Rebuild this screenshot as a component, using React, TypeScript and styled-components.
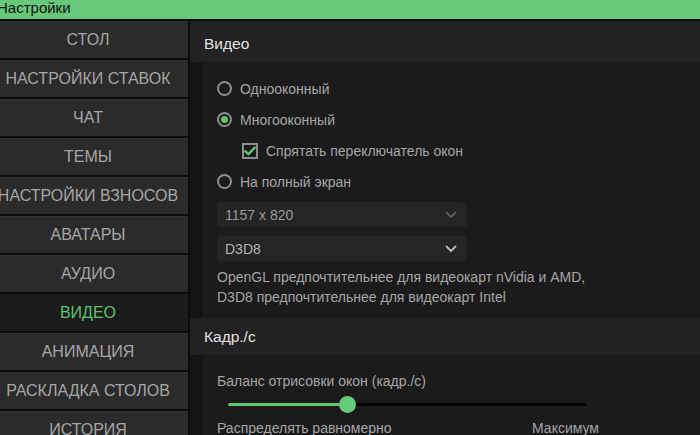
import React from "react";
import styled, { createGlobalStyle } from "styled-components";

const GlobalStyle = createGlobalStyle`
  html, body { margin: 0; padding: 0; background: #0c0c0c; overflow: hidden; }
  * { box-sizing: border-box; }
`;

const Window = styled.div`
  margin-left: -12px;
  width: 712px;
  height: 435px;
  display: flex;
  flex-direction: column;
  background: #0c0c0c;
  font-family: "Liberation Sans", Arial, sans-serif;
  overflow: hidden;
`;

const TitleBar = styled.div`
  height: 21px;
  flex: none;
  background: #66c97a;
  border-bottom: 2px solid #0a0a0a;
  padding-left: 9px;
  font-size: 15px;
  line-height: 16px;
  color: #111;
`;

const Body = styled.div`
  flex: 1;
  display: flex;
  min-height: 0;
`;

const Sidebar = styled.nav`
  width: 202px;
  flex: none;
  padding-right: 2px;
  display: flex;
  flex-direction: column;
  gap: 2px;
  background: #0c0c0c;
`;

const NavButton = styled.div<{ $active?: boolean }>`
  height: 37px;
  flex: none;
  display: flex;
  align-items: center;
  justify-content: center;
  white-space: nowrap;
  background: ${(p) => (p.$active ? "#1c1c1c" : "#2b2b2b")};
  border-top: 1px solid ${(p) => (p.$active ? "#1c1c1c" : "#333")};
  color: ${(p) => (p.$active ? "#5ec46f" : "#a6a6a6")};
  font-size: 16px;
  text-transform: uppercase;
`;

const Main = styled.main`
  flex: 1;
  min-width: 0;
  background: #141414;
  padding-top: 4px;
  display: flex;
  flex-direction: column;
  position: relative;
  &::before {
    content: "";
    position: absolute;
    left: 0;
    right: 0;
    top: 0;
    height: 4px;
    background: #222;
  }
`;

const SectionHeader = styled.div`
  height: 37px;
  flex: none;
  display: flex;
  align-items: center;
  padding-left: 14px;
  background: #222;
  color: #e2e2e2;
  font-size: 15.5px;
`;

const SectionBody = styled.div<{ $pt: number; $pb: number }>`
  margin-left: 13px;
  background: #1b1b1b;
  padding: ${(p) => p.$pt}px 0 ${(p) => p.$pb}px 14px;
  display: flex;
  flex-direction: column;
  color: #a6a6a6;
  font-size: 14px;
`;

const OptionRow = styled.div<{ $indent?: number }>`
  height: 31px;
  display: flex;
  align-items: center;
  padding-left: ${(p) => p.$indent ?? 0}px;
  gap: 8px;
`;

const RadioCircle = styled.span<{ $checked?: boolean }>`
  width: 15px;
  height: 15px;
  border-radius: 50%;
  border: 2px solid #8e8e8e;
  display: flex;
  align-items: center;
  justify-content: center;
  &::after {
    content: "";
    width: 7px;
    height: 7px;
    border-radius: 50%;
    background: ${(p) => (p.$checked ? "#5ec46f" : "transparent")};
  }
`;

const CheckBox = styled.span`
  width: 16px;
  height: 16px;
  border: 2px solid #8e8e8e;
  display: flex;
  align-items: center;
  justify-content: center;
`;

const Select = styled.div<{ $dim?: boolean; $mt: number }>`
  width: 250px;
  height: 25px;
  margin-top: ${(p) => p.$mt}px;
  border-radius: 4px;
  background: #252525;
  display: flex;
  align-items: center;
  justify-content: space-between;
  padding: 0 10px 0 8px;
  color: ${(p) => (p.$dim ? "#9a9a9a" : "#b4b4b4")};
  font-size: 14px;
  svg { color: ${(p) => (p.$dim ? "#5e5e5e" : "#b8b8b8")}; }
`;

const Note = styled.div`
  margin-top: 6px;
  line-height: 20px;
`;

const Label = styled.div`
  line-height: 20px;
`;

const SliderWrap = styled.div`
  margin: 5px 0 0 11px;
  width: 359px;
  height: 16px;
  position: relative;
  display: flex;
  align-items: center;
`;

const Track = styled.div`
  width: 100%;
  height: 3px;
  background: #050505;
  border-radius: 2px;
`;

const TrackFill = styled.div`
  height: 100%;
  background: #5ec46f;
  border-radius: 2px;
`;

const Thumb = styled.div`
  position: absolute;
  top: 0;
  width: 17px;
  height: 17px;
  margin-left: -8.5px;
  border-radius: 50%;
  background: #66c97a;
`;

const SliderLabels = styled.div`
  margin-top: 6px;
  width: 382px;
  display: flex;
  justify-content: space-between;
  line-height: 20px;
  white-space: nowrap;
`;

const Chevron = () => (
  <svg width="12" height="8" viewBox="0 0 12 8" fill="none">
    <path d="M1.5 1.5 L6 6 L10.5 1.5" stroke="currentColor" strokeWidth="1.8" strokeLinecap="round" strokeLinejoin="round" />
  </svg>
);

const Check = () => (
  <svg width="12" height="10" viewBox="0 0 12 10" fill="none">
    <path d="M1.2 5.2 L4.4 8.2 L10.8 1.6" stroke="#5ec46f" strokeWidth="2.4" strokeLinecap="round" strokeLinejoin="round" />
  </svg>
);

const items = [
  "Стол",
  "Настройки ставок",
  "Чат",
  "Темы",
  "Настройки взносов",
  "Аватары",
  "Аудио",
  "Видео",
  "Анимация",
  "Раскладка столов",
  "История",
];

export default function App() {
  const pct = 33.4;
  return (
    <>
      <GlobalStyle />
      <Window>
        <TitleBar>Настройки</TitleBar>
        <Body>
          <Sidebar>
            {items.map((it) => (
              <NavButton key={it} $active={it === "Видео"}>
                {it}
              </NavButton>
            ))}
          </Sidebar>
          <Main>
            <SectionHeader>Видео</SectionHeader>
            <SectionBody $pt={11} $pb={11}>
              <OptionRow>
                <RadioCircle />
                Однооконный
              </OptionRow>
              <OptionRow>
                <RadioCircle $checked />
                Многооконный
              </OptionRow>
              <OptionRow $indent={25}>
                <CheckBox>
                  <Check />
                </CheckBox>
                Спрятать переключатель окон
              </OptionRow>
              <OptionRow>
                <RadioCircle />
                На полный экран
              </OptionRow>
              <Select $dim $mt={5}>
                1157 x 820
                <Chevron />
              </Select>
              <Select $mt={9}>
                D3D8
                <Chevron />
              </Select>
              <Note>
                OpenGL предпочтительнее для видеокарт nVidia и AMD,
                <br />
                D3D8 предпочтительнее для видеокарт Intel
              </Note>
            </SectionBody>
            <SectionHeader>Кадр./с</SectionHeader>
            <SectionBody $pt={16} $pb={10}>
              <Label>Баланс отрисовки окон (кадр./с)</Label>
              <SliderWrap>
                <Track>
                  <TrackFill style={{ width: `${pct}%` }} />
                </Track>
                <Thumb style={{ left: `${pct}%` }} />
              </SliderWrap>
              <SliderLabels>
                <span>Распределять равномерно</span>
                <span>Максимум</span>
              </SliderLabels>
            </SectionBody>
          </Main>
        </Body>
      </Window>
    </>
  );
}
